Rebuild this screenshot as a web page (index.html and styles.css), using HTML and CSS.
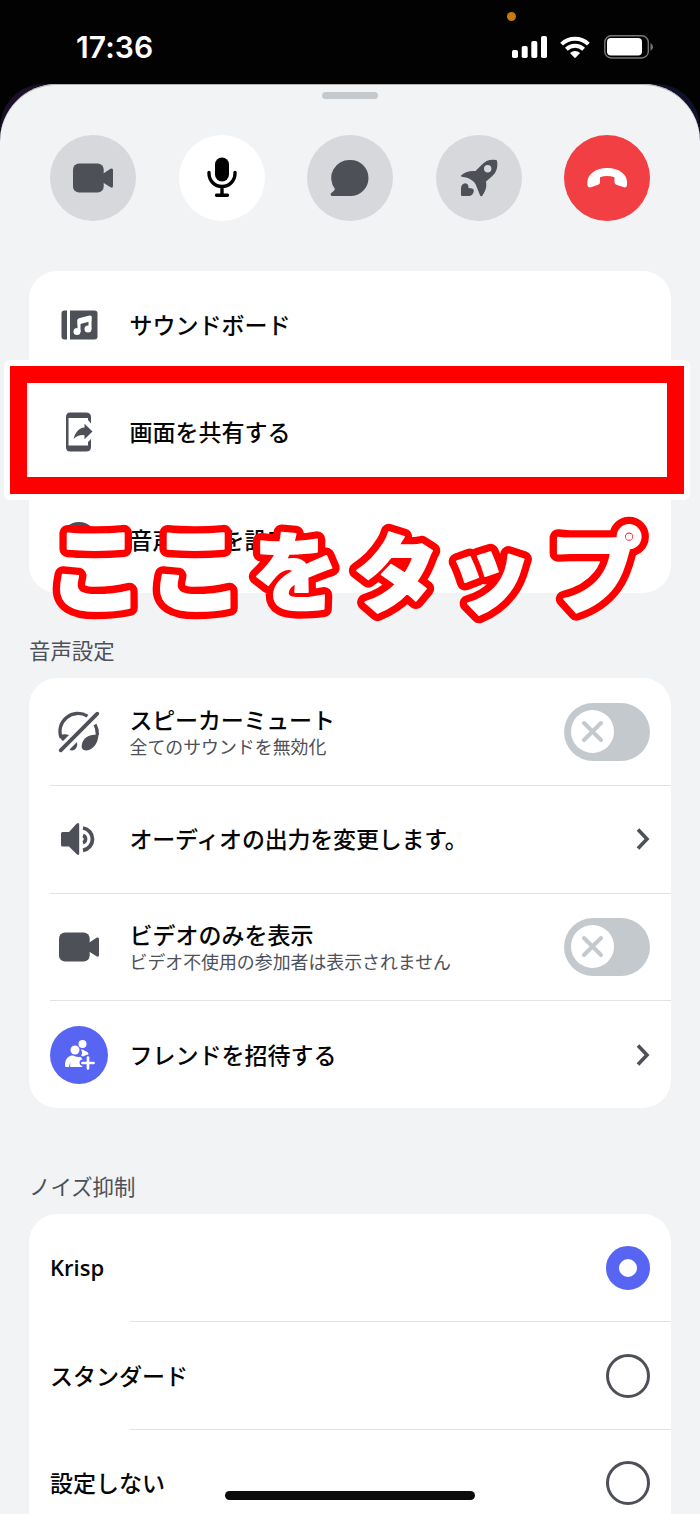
FILE: index.html
```html
<!DOCTYPE html>
<html lang="ja">
<head>
<meta charset="utf-8">
<title>通話</title>
<link rel="stylesheet" href="styles.css">
</head>
<body>
<svg width="0" height="0" class="defs">
  <symbol id="video" viewBox="0 0 40 30"><rect x="0" y="0.5" width="30.7" height="29" rx="6"/><path d="M30 10.8 37.5 5.8Q40 4.6 40 7V23Q40 25.500 37.500 24.300L30 19.500Z"/></symbol>
  <symbol id="chev" viewBox="0 0 14 22"><path d="M2 1.500 11 11 2 20.500" fill="none" stroke="#4e5058" stroke-width="3.600"/></symbol>
</svg>
<div class="phone">
  <header class="status">
    <span class="time">17:36</span>
    <span class="mic-dot"></span>
    <div class="indicators">
      <svg class="signal" viewBox="0 0 35 22" fill="#fff"><rect x="0" y="14" width="6" height="8" rx="1.800"/><rect x="9.700" y="10" width="6" height="12" rx="1.800"/><rect x="19.300" y="5" width="6" height="17" rx="1.800"/><rect x="29" y="0" width="6" height="22" rx="1.800"/></svg>
      <svg class="wifi" viewBox="0 0 30 22"><g fill="none" stroke="#fff" stroke-width="4"><path d="M1.600 8.100A19.300 19.300 0 0 1 28.400 8.100"/><path d="M6.400 13.300A12.300 12.300 0 0 1 23.600 13.300"/></g><path d="M10 17A7.300 7.300 0 0 1 20 17L15.800 21.500Q15 22.300 14.200 21.500Z" fill="#fff"/></svg>
      <svg class="battery" viewBox="0 0 49 24"><rect x="0.800" y="0.800" width="43.500" height="22.200" rx="6.500" fill="none" stroke="#77777a" stroke-width="1.400"/><rect x="3" y="3" width="35" height="17.500" rx="4" fill="#fff"/><path d="M46.500 8Q49 9.500 49 12T46.500 16Z" fill="#77777a"/></svg>
    </div>
  </header>
  <div class="backdrop">
  <main class="sheet">
    <div class="grabber"></div>
    <nav class="controls">
      <span class="ctl"><svg width="40" height="30" fill="#4e5058"><use href="#video"/></svg></span>
      <span class="ctl on"><svg width="30" height="41" viewBox="0 0 30 41"><rect x="8" y="0.500" width="14" height="24" rx="7"/><path d="M2 15.500V16.500A13 13 0 0 0 28 16.500V15.500M15 29.500V38M9.500 38.200H20.500" fill="none" stroke="#000" stroke-width="3.400" stroke-linecap="round"/></svg></span>
      <span class="ctl"><svg width="40" height="38" viewBox="0 0 40 38" fill="#4e5058"><path d="M20.500 1A18 18 0 0 1 20.500 37H2.500C0.300 37 0.200 34.800 1.500 33.800 3.300 32.600 4.300 31.300 5 30A18 18 0 0 1 20.500 1Z"/></svg></span>
      <span class="ctl"><svg width="38" height="38" viewBox="0 0 38 38" fill="#4e5058"><path fill-rule="evenodd" d="M36 1Q37.200 1.200 37.200 3C38 10 35.500 14.500 31 18.300L26 22.500C27 28 25.500 32 22.300 36.700 21.700 37.600 20.500 37.600 20.100 36.600Q18.200 31.500 16.500 27.500C15 22 9.500 18.500 1.800 17.700Q0.500 17.500 1 16.600C5 12.500 10.500 11.500 15.500 12L21 6.500C25.500 1.300 30.500 0 36 1ZM27.700 6A3.700 3.700 0 1 0 27.700 13.400 3.700 3.700 0 1 0 27.700 6Z"/><path d="M1 36V29Q1 26.500 3 25L5.200 24.300Q8.600 24.600 8.600 29Q14 29 13.800 31.500 14 33.200 12.500 35.300 11.300 37 9 37H2Q1 37 1 36Z"/></svg></span>
      <span class="ctl end"><svg width="40" height="22" viewBox="0 0 40 22" fill="#fff"><path d="M20 1C33 1 40 8 40 15V18Q39.800 21 37 20.300L30 18Q27.500 17.200 27.500 15.500V10.300Q20 7.800 13 10.300V15.500Q13 17.200 10.500 18L4 20.300Q.6 21 .4 17.500V15C.4 8 8 1 20 1Z"/></svg></span>
    </nav>

    <section class="card first">
      <div class="row"><span class="icon"><svg width="37" height="30" viewBox="0 0 37 30" fill="#4e5058"><path d="M3.500.5H6V29.500H3.500Q.5 29.500.5 26.500V3.500Q.5.500 3.500.500Z"/><path d="M9 .5H33.500Q36.500.500 36.500 3.500V26.500Q36.500 29.500 33.500 29.500H9Z"/><path d="M18 22V11L29 8V19" fill="none" stroke="#fff" stroke-width="3"/><path d="M16.500 10.200Q16.500 8.800 18 8.300L28.500 5.500Q30.500 5 30.500 7V11L16.500 14.800Z" fill="#fff"/><circle cx="16" cy="21.500" r="3.500" fill="#fff"/><circle cx="27" cy="19" r="3.500" fill="#fff"/></svg></span><span class="label">サウンドボード</span></div>
      <div class="row"><span class="icon"><svg width="28" height="40" viewBox="0 0 28 40" fill="#4e5058"><path d="M5 .5H21Q26 .5 26 5V11.500L23 8V6H3.500V33.500H23V30L26 27V35Q26 39.500 21 39.500H5Q1 39.500 1 35V5Q1 .5 5 .5Z"/><path d="M8.500 27C10.500 20 14 16 19.500 15.500V11.800L27.500 19.500 19.500 27.200V23.200Q13 22.500 8.500 27Z"/></svg></span><span class="label">画面を共有する</span></div>
      <div class="row"><span class="icon"><svg width="36" height="36" viewBox="0 0 36 36"><circle cx="18" cy="18" r="18" fill="#4e5058"/></svg></span><span class="label">音声状態を設定</span></div>
    </section>

    <h2 class="heading">音声設定</h2>
    <section class="card voice">
      <div class="row"><span class="icon"><svg width="42" height="42" viewBox="0 0 42 42" fill="none" stroke="#4e5058"><path d="M3.200 27A18 18 0 0 1 29.500 5.200M37 13.500Q39.500 18 39.300 24" stroke-width="3.300"/><path d="M2.700 39.300 39.300 2.700" stroke-width="3.800" stroke-linecap="round"/><path d="M2 24Q7 22.500 11 24L5 30Q2 28 2 24ZM11.500 38.500 19 31Q20 37 16 39Q13.500 40 11.500 38.500ZM24 33C25.500 26 32 22.500 40.500 24 40 32.500 35 39 28.500 39.500 24 39.500 23 36.500 24 33Z" fill="#4e5058" stroke="none"/></svg></span><div class="text"><span class="label tight">スピーカーミュート</span><span class="sub">全てのサウンドを無効化</span></div><span class="toggle"><svg viewBox="0 0 43 43"><path d="M13 13 30 30M30 13 13 30"/></svg></span></div>
      <div class="row"><span class="icon"><svg width="39" height="34" viewBox="0 0 39 34" fill="none" stroke="#4e5058"><path d="M2.500 10H9L16.500 1.800Q19.200 0 19.200 2.800V31.500Q19.200 34 16.500 32L9 24.500H2.500Q1 24.500 1 23V11.500Q1 10 2.500 10Z" fill="#4e5058" stroke="none"/><path d="M23 6A11.300 11.300 0 0 1 23 28.300" stroke-width="3.800"/><path d="M23 13.500A3.800 3.800 0 0 1 23 20.700" stroke-width="3.600"/></svg></span><span class="label tight">オーディオの出力を変更します。</span><svg class="chev"><use href="#chev"/></svg></div>
      <div class="row"><span class="icon"><svg width="40" height="30" fill="#4e5058"><use href="#video"/></svg></span><div class="text"><span class="label">ビデオのみを表示</span><span class="sub">ビデオ不使用の参加者は表示されません</span></div><span class="toggle"><svg viewBox="0 0 43 43"><path d="M13 13 30 30M30 13 13 30"/></svg></span></div>
      <div class="row"><span class="icon invite"><svg width="32" height="32" viewBox="0 0 32 32" fill="#fff"><circle cx="19.500" cy="5" r="4"/><path d="M18 10.500Q20.500 10 22 12 25.500 12.500 25.500 15.500 22.500 16 20 17.500L18 16.500Q20 14 18 10.500Z"/><circle cx="12" cy="11" r="4.500"/><path d="M2 26.500C2 19 6 16.500 10 16.500Q13 18.500 17.300 17.800 19 19 19.400 20.500Q16.500 20.700 16.500 24 17 27 19.500 27.500V28H7.200V23L6 28H3Q2 28 2 26.500Z"/><path d="M25 18.500V29.500M19.500 24H30.500" stroke="#fff" stroke-width="2.700" stroke-linecap="round"/></svg></span><span class="label">フレンドを招待する</span><svg class="chev"><use href="#chev"/></svg></div>
    </section>

    <h2 class="heading">ノイズ抑制</h2>
    <section class="card noise">
      <div class="row"><span class="label latin">Krisp</span><span class="radio checked"></span></div>
      <div class="row"><span class="label">スタンダード</span><span class="radio"></span></div>
      <div class="row"><span class="label">設定しない</span><span class="radio"></span></div>
    </section>
  </main>
  </div>
  <div class="highlight"></div>
  <svg class="caption" viewBox="0 0 700 200">
    <defs><text id="tap"><tspan x="47.5" y="135" font-size="97">こ</tspan><tspan x="147.5" y="135" font-size="97">こ</tspan><tspan x="252" y="134.5" font-size="87">を</tspan><tspan x="353.5" y="136" font-size="86">タ</tspan><tspan x="444.5" y="135" font-size="89">ッ</tspan><tspan x="549.5" y="136" font-size="93">プ</tspan></text></defs>
    <use href="#tap" class="outline"/><use href="#tap" class="face"/>
  </svg>
  <div class="home"></div>
</div>
</body>
</html>
```
FILE: styles.css
```css
* { box-sizing: border-box; }
body { margin: 0; font-family: "Noto Sans CJK JP", sans-serif; color: #060607; }
svg { display: block; }
.defs { position: absolute; }
.phone { position: relative; width: 700px; height: 1514px; overflow: hidden; background: #020202; display: flex; flex-direction: column; }

.status { position: relative; height: 84px; flex: none; display: flex; justify-content: space-between; align-items: center; padding: 10px 47px 0 76px; }
.time { font: 600 30px/36px Inter, sans-serif; color: #fff; letter-spacing: 0.1px; }
.mic-dot { position: absolute; left: 507px; top: 12px; width: 9px; height: 9px; border-radius: 50%; background: #c87a0c; }
.indicators { display: flex; align-items: center; }
.signal { width: 35px; height: 22px; margin-right: 13px; }
.wifi { width: 30px; height: 22px; margin-right: 14px; }
.battery { width: 49px; height: 24px; }

.backdrop { flex: none; height: 1430px; border-radius: 44px 44px 0 0; background: linear-gradient(90deg, #1c1027, #10112b); }
.sheet { height: 1430px; border-radius: 57px 57px 0 0; background: #f1f3f5; box-shadow: inset 0 1px 0 #b4b5b7; padding: 8px 29px 0; display: flex; flex-direction: column; }
.grabber { width: 56px; height: 7px; border-radius: 4px; background: #c4c9ce; margin: 0 auto; flex: none; }
.controls { display: flex; justify-content: space-between; padding: 35.500px 21px 0; margin-bottom: 50.500px; }
.ctl { width: 86px; height: 86px; border-radius: 50%; background: #d7d8dc; display: grid; place-items: center; }
.ctl.on { background: #fff; }
.ctl.end { background: #f23f43; }

.card { flex: none; background: #fff; border-radius: 28px; }
.first { height: 322px; }
.first .row { height: 107.500px; }
.row { position: relative; height: 107.600px; display: flex; align-items: center; padding: 0 21px; }
.icon { width: 58px; height: 58px; margin-right: 21.500px; display: grid; place-items: center; flex: none; }
.invite { border-radius: 50%; background: #5865f2; }
.label { font-size: 23px; line-height: 30px; font-weight: 500; white-space: nowrap; padding-bottom: 2px; }
.tight { letter-spacing: -0.2px; }
.latin { font-family: "Open Sans", sans-serif; font-weight: 600; font-size: 22px; }
.text { display: flex; flex-direction: column; }
.text .label { line-height: 29px; padding: 0; }
.sub { font-size: 17.900px; line-height: 25px; color: #4e5058; white-space: nowrap; }
.voice .row + .row::before, .noise .row + .row::before { content: ""; position: absolute; top: -0.500px; left: 21px; right: 0; height: 1px; background: #e1e2e4; }
.noise .row + .row::before { left: 101px; top: -1px; }
.heading { margin: 0; height: 85px; padding-top: 41px; font-size: 21.400px; line-height: 31px; font-weight: 400; color: #4e5058; flex: none; }
.voice + .heading { height: 106px; padding-top: 62px; }
.toggle { width: 86px; height: 58px; border-radius: 29px; background: #c4c9ce; margin-left: auto; padding: 7.500px 6.500px; }
.toggle svg { width: 43px; height: 43px; border-radius: 50%; background: #fff; fill: none; stroke: #c4c9ce; stroke-width: 4; stroke-linecap: round; }
.chev { width: 14px; height: 22px; margin-left: auto; }
.radio { width: 44px; height: 44px; border: 3.500px solid #4e5058; border-radius: 50%; margin-left: auto; }
.radio.checked { border: 13px solid #5865f2; }

.highlight { position: absolute; left: 10px; top: 366px; width: 674px; height: 128px; border: 17px solid #f00; }
.highlight::before { content: ""; position: absolute; inset: -23px; border: 6px solid #fff; border-radius: 6px; }
.caption { position: absolute; left: 0; top: 470px; width: 700px; height: 200px; overflow: visible; font-family: "Noto Sans CJK JP", sans-serif; font-weight: 900; stroke-linejoin: round; }
.outline { fill: #f00; stroke: #f00; stroke-width: 16.500px; }
.face { fill: #fff; stroke: #fff; stroke-width: 1.800px; }
.home { position: absolute; left: 225px; top: 1491px; width: 250px; height: 9px; border-radius: 5px; background: #0c0c0c; }
```
